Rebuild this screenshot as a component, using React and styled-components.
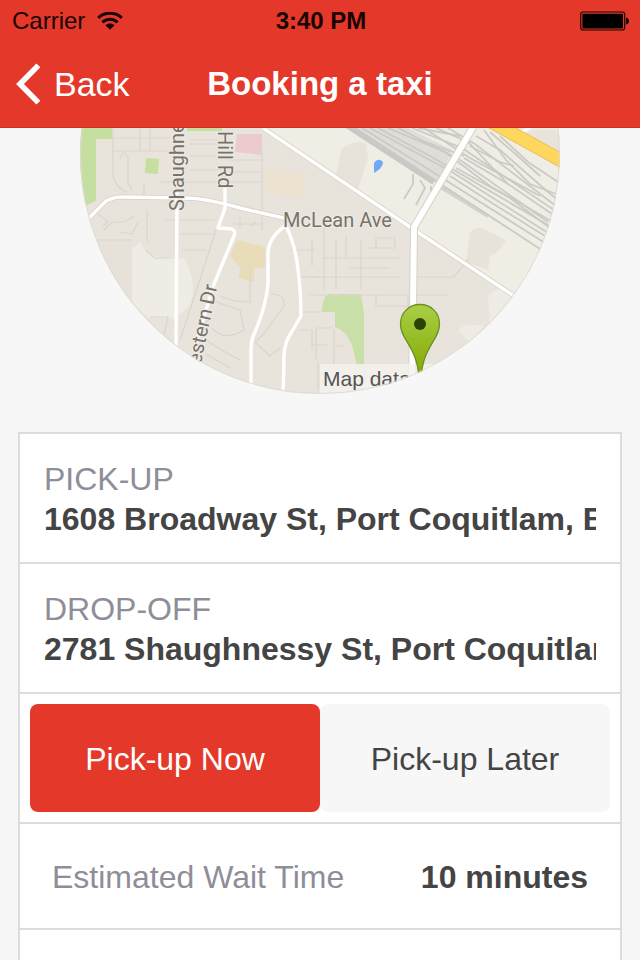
import React, { useState } from 'react';
import styled, { createGlobalStyle } from 'styled-components';

const GlobalStyle = createGlobalStyle`
  * {
    box-sizing: border-box;
  }

  body {
    margin: 0;
    font-family: "Liberation Sans", Arial, sans-serif;
    background-color: #f7f7f7;
  }
`;

const WifiIcon = () => (
  <svg width="26" height="18" viewBox="0 0 26 18" aria-hidden="true">
    <g fill="none" stroke="#1a0503" strokeWidth="3">
      <path d="M1.2 5.8 C7.6 -0.2 18.4 -0.2 24.8 5.8" />
      <path d="M5.4 10.4 C9.6 6.2 16.4 6.2 20.6 10.4" />
    </g>
    <path d="M8.4 13.2 C11 10.8 15 10.8 17.6 13.2 L13 17.8 Z" fill="#1a0503" />
  </svg>
);

const BatteryIcon = () => (
  <svg width="50" height="20" viewBox="0 0 50 20" aria-hidden="true">
    <rect x="0.7" y="1" width="44" height="18" rx="2.5" fill="none" stroke="#1a0503" strokeWidth="1.2" />
    <rect x="2.4" y="2.8" width="40.6" height="14.6" rx="1" fill="#000" />
    <path d="M46 6.5 C50 7 50 13 46 13.5 Z" fill="#1a0503" />
  </svg>
);

const BackIcon = () => (
  <svg width="26" height="42" viewBox="0 0 26 42" aria-hidden="true">
    <path d="M22.4 2.4 L4 21 L22.4 39.6" fill="none" stroke="#fff" strokeWidth="5.6" />
  </svg>
);

const railLines = [
  'M352 128 L413 166 L560 262',
  'M362 128 L420 164 L545 243',
  'M370 128 L452 172 L556 238',
  'M378 128 L430 156 L560 232',
  'M388 128 L445 152 L490 186 L560 226',
  'M398 128 L460 160 L548 222',
  'M412 128 L462 148 L560 214',
  'M424 128 L470 158 L540 196',
  'M436 128 L468 142 L508 184',
  'M448 128 L475 144 L556 206',
  'M418 128 L460 136',
  'M420 140 L464 156',
  'M476 136 L500 150 L548 192 L558 200',
  'M484 130 L506 160 L530 184 L556 194',
  'M490 132 L520 158 L540 176',
  'M500 136 L528 162 L558 182',
  'M470 146 L500 162 L514 166',
  'M464 158 L508 184 L552 214',
  'M456 168 L510 198 L550 228',
  'M450 176 L495 205 L545 236',
];

const laneLines = [
  'M113 128 V176 Q117 190 128 192',
  'M120 158 Q124 148 128 158 V184 Q134 188 130 190',
  'M113 138 H170 M113 151 H170 M140 128 V151',
  'M144 183 V198 M160 182 H222 M190 140 H218 M190 156 H220',
  'M190 170 H222 M190 144 H218 M228 160 H262 M228 172 H262 M228 182 H262',
  'M262 150 V214 M150 151 V128',
  'M104 230 L112 222 H124 L135 216 M120 232 L132 234 L138 222 M98 214 L108 222 L103 226',
  'M145 250 L155 258 H170 M147 210 V242 M165 220 H176',
  'M180 220 H215 M180 234 H214 M182 250 H206 M216 230 L190 310 L180 340',
  'M240 217 V228 M232 224 H262 M262 214 V230 M250 226 L256 222',
  'M212 300 Q226 306 240 310 L244 330 Q224 342 212 328',
  'M220 296 Q232 302 250 302 V270',
  'M206 340 Q220 350 240 360 M206 354 L230 368 M198 330 L210 318',
  'M270 294 Q286 294 284 306 L262 336 L255 342 L270 356 L280 348',
  'M300 277 H322 M300 312 H322 M290 250 H315 M312 240 V266',
  'M324 228 V290 M336 240 V290 M361 240 V290 M324 258 H400 M310 277 H400 M350 268 H390',
  'M310 295 H448 M376 295 V306 H408 V296 M334 330 V364 M316 328 H334 M316 328 V360',
  'M300 330 H312 V350 M312 345 H328 M334 346 H344 M318 362 V390 M416 277 H454 L468 260',
  'M368 248 H395 V238 H376 V248 M346 258 V236',
  'M150 317 H168 L164 335 M96 240 H132',
];

const TaxiMap = () => (
  <MapImage viewBox="80 -86 480 480" role="img" aria-label="Map of the drop-off">
    <defs>
      <linearGradient id="pin" x1="0" y1="0" x2="0" y2="1">
        <stop offset="0" stopColor="#a9cf46" />
        <stop offset="1" stopColor="#82a800" />
      </linearGradient>
    </defs>
    <rect x="80" y="-86" width="480" height="480" fill="#e8e4dc" />

    {/* land */}
    <path d="M283 100 H560 V300 L513 295 L413 229 L263 128 Z" fill="#f0ede5" />
    <path d="M132 250 L140 242 Q150 262 184 258 Q198 284 190 304 L176 318 H148 L132 302 Z" fill="#efece5" />
    <path d="M98 241 H128 Q132 244 132 250 V312 L100 270 Z" fill="#e6e1d9" />
    <path d="M341 150 Q350 140 366 143 L368 158 Q360 182 358 190 L336 176 Z" fill="#e7e3da" />
    <path d="M470 232 Q478 225 486 230 L506 240 Q500 252 490 256 L488 270 L466 262 Z" fill="#e7e3da" />
    <path d="M488 295 L500 288 L513 297 L490 325 Z M458 330 Q466 322 484 326 L470 342 Z" fill="#efece5" />
    <path d="M80 128 H112 V139 H96 V201 L80 208 Z M187 128 H222 V131 H187 Z" fill="#c5dfa1" />
    <path d="M146 158 L159 159 L158 174 L145 173 Z" fill="#c5dfa1" />
    <path d="M328 294 H361 L364 314 V366 H357 L352 345 Q346 330 335 327 V312 H322 Q322 298 328 294 Z" fill="#c8e0a8" />
    <path d="M237 134 H262 V155 L235 152 Z" fill="#eccbcf" />
    <path d="M268 169 H282 V173 H303 V196 H285 L265 191 Z" fill="#ede2cf" />
    <path d="M237 240 L265 247 V268 H254 V282 L238 278 L241 268 L230 256 Z" fill="#e8dcb9" />
    <path d="M374 173 L374 163 Q378 157 383 162 Q383 168 374 173 Z" fill="#70a8f8" />

    <g fill="none" stroke="#dad5cc" strokeWidth="1.2">
      {laneLines.map((d) => <path key={d} d={d} />)}
    </g>

    {/* rail yard */}
    <path d="M344 124 L400 124 L452 150 L442 176 L432 184 Z" fill="#dfddd8" />
    <path d="M345 124 L434 182" stroke="#c8c8c6" strokeWidth="6" />
    <path d="M436 184 L488 216" stroke="#d4d2ce" strokeWidth="4" />
    <g fill="none" stroke="#cbcac7" strokeWidth="1.8">
      {railLines.map((d) => <path key={d} d={d} />)}
      <path d="M413 174 V184 L404 199 M420 180 L425 188 L416 205 M431 186 V196" />
    </g>

    {/* roads */}
    <path d="M533 130 L560 130 V155 L524 134 Z" fill="#e8e4dc" />
    <path d="M518 135 L535 124" stroke="#fff" strokeWidth="3" />
    <path d="M488 120 L566 163" stroke="#e8c257" strokeWidth="14" />
    <path d="M488 120 L566 163" stroke="#ffd75e" strokeWidth="12" />
    <g fill="none" stroke="#d6d0c6" strokeWidth="5">
      <path d="M86 221 L104 203 Q110 197 122 197 L185 198 Q205 198 240 208 L288 219" />
      <path d="M263 128 L413 229 L514 296" />
    </g>
    <g fill="none" stroke="#fff" strokeWidth="3.4" strokeLinejoin="round">
      <path d="M86 221 L104 203 Q110 197 122 197 L185 198 Q205 198 240 208 L288 219" />
      <path d="M177 190 L176 346" />
      <path d="M225 185 V208 L218 228 L232 229 Q236 231 234 236 L214 284 L194 350" />
      <path d="M285 226 Q268 238 268 254 V284 Q266 306 255 332 Q251 340 251 350 V392" />
      <path d="M286 226 Q294 242 297 262 Q301 290 301 316 L288 338 Q283 350 284 364 L283 394" />
      <path d="M263 128 L413 229 L514 296" />
    </g>
    <path d="M482 112 L414 227 L412 394" fill="none" stroke="#d6d1c8" strokeWidth="8" />
    <path d="M482 112 L414 227 L412 394" fill="none" stroke="#fff" strokeWidth="6" />

    <MapLabel x="283" y="227">McLean Ave</MapLabel>
    <MapLabel transform="translate(184 211) rotate(-90)">Shaughnessy St</MapLabel>
    <MapLabel transform="translate(218 131) rotate(90)">Hill Rd</MapLabel>
    <MapLabel transform="translate(197 382) rotate(-78)">Western Dr</MapLabel>

    <rect x="320" y="364" width="240" height="30" fill="#f5f3f0" fillOpacity="0.8" />
    <Credit x="323" y="386">Map data</Credit>

    <path
      d="M420 304.500 C408.500 304.500 400.500 313 400.500 324 C400.500 340 417 346 419 378 H421 C423 346 439.500 340 439.500 324 C439.500 313 431.500 304.500 420 304.500 Z"
      fill="url(#pin)"
      stroke="#718e25"
      strokeWidth="1.3"
    />
    <circle cx="420" cy="324" r="6" fill="#2c4206" />
    <circle cx="320" cy="154" r="239.500" fill="none" stroke="#dedbd5" strokeWidth="1" />
  </MapImage>
);

const App = () => {
  const [pickup, setPickup] = useState('1608 Broadway St, Port Coquitlam, BC');
  const [dropoff, setDropoff] = useState('2781 Shaughnessy St, Port Coquitlam, BC');
  const [when, setWhen] = useState('now');

  return (
    <Page>
      <GlobalStyle />
      <Header>
        <StatusBar>
          <Carrier>
            Carrier
            <WifiIcon />
          </Carrier>
          <Clock>3:40 PM</Clock>
          <Battery>
            <BatteryIcon />
          </Battery>
        </StatusBar>
        <NavBar>
          <BackButton type="button">
            <BackIcon />
            Back
          </BackButton>
          <Title>Booking a taxi</Title>
        </NavBar>
      </Header>

      <MapArea>
        <TaxiMap />
      </MapArea>

      <BookingCard>
        <AddressRow>
          <Label htmlFor="pickup">PICK-UP</Label>
          <AddressInput id="pickup" value={pickup} onChange={(e) => setPickup(e.target.value)} />
        </AddressRow>
        <AddressRow>
          <Label htmlFor="dropoff">DROP-OFF</Label>
          <AddressInput id="dropoff" value={dropoff} onChange={(e) => setDropoff(e.target.value)} />
        </AddressRow>
        <TimeRow>
          <TimeButton type="button" $active={when === 'now'} onClick={() => setWhen('now')}>
            Pick-up Now
          </TimeButton>
          <TimeButton type="button" $active={when === 'later'} onClick={() => setWhen('later')}>
            Pick-up Later
          </TimeButton>
        </TimeRow>
        <InfoRow>
          <InfoName>Estimated Wait Time</InfoName>
          <InfoValue>10 minutes</InfoValue>
        </InfoRow>
      </BookingCard>
    </Page>
  );
};

export default App;

const Page = styled.div`
  display: flex;
  flex-direction: column;
  min-height: 100vh;
`;

const Header = styled.header`
  border-bottom: 1px solid #c9301f;
  background-color: #e4382a;
`;

const StatusBar = styled.div`
  display: grid;
  grid-template-columns: 1fr auto 1fr;
  align-items: center;
  height: 41px;
  padding: 0 10px 0 12px;
  font-size: 24px;
  color: #1a0503;
`;

const Carrier = styled.div`
  display: flex;
  align-items: center;
  gap: 12px;
`;

const Clock = styled.div`
  font-weight: 700;
`;

const Battery = styled.div`
  display: flex;
  justify-content: flex-end;
`;

const NavBar = styled.div`
  display: grid;
  grid-template-columns: 1fr auto 1fr;
  align-items: center;
  height: 86px;
  padding: 0 16px;
`;

const BackButton = styled.button`
  display: flex;
  align-items: center;
  justify-self: start;
  gap: 12px;
  padding: 0;
  border: none;
  font-family: inherit;
  font-size: 34px;
  background: none;
  color: #fff;
`;

const Title = styled.h1`
  margin: 0;
  font-size: 33px;
  font-weight: 700;
  color: #fff;
`;

const MapArea = styled.section`
  display: flex;
  justify-content: center;
  align-items: flex-end;
  height: 266px;
  overflow: hidden;
`;

const MapImage = styled.svg`
  flex: none;
  width: 480px;
  height: 480px;
  border-radius: 50%;
`;

const MapLabel = styled.text`
  font-family: Roboto, sans-serif;
  font-size: 20px;
  fill: #77726a;
  stroke: #efebe4;
  stroke-width: 2px;
  paint-order: stroke;
`;

const Credit = styled.text`
  font-family: "Liberation Sans", Arial, sans-serif;
  font-size: 21px;
  fill: #555;
`;

const BookingCard = styled.main`
  flex: 1;
  margin: 38px 18px 0;
  border: 2px solid #dcdcdc;
  border-bottom: none;
  background-color: #fff;
`;

const Row = styled.div`
  display: flex;
  border-bottom: 2px solid #dcdcdc;
`;

const AddressRow = styled(Row)`
  flex-direction: column;
  padding: 25px 24px 23px;
`;

const Label = styled.label`
  font-size: 32px;
  line-height: 40px;
  color: #8e8e98;
`;

const AddressInput = styled.input`
  width: 100%;
  height: 40px;
  padding: 0;
  border: none;
  outline: none;
  font-family: inherit;
  font-size: 32px;
  font-weight: 700;
  background: none;
  color: #444;
`;

const TimeRow = styled(Row)`
  padding: 10px;
`;

const TimeButton = styled.button`
  flex: 1;
  height: 108px;
  padding: 2px 0 0;
  border: none;
  border-radius: 8px;
  font-family: inherit;
  font-size: 32px;
  background-color: ${({ $active }) => ($active ? '#e4382a' : '#f7f7f7')};
  color: ${({ $active }) => ($active ? '#fff' : '#444')};
`;

const InfoRow = styled(Row)`
  justify-content: space-between;
  align-items: center;
  height: 106px;
  padding: 2px 32px 0;
  font-size: 32px;
`;

const InfoName = styled.span`
  color: #8e8e98;
`;

const InfoValue = styled.strong`
  color: #444;
`;
